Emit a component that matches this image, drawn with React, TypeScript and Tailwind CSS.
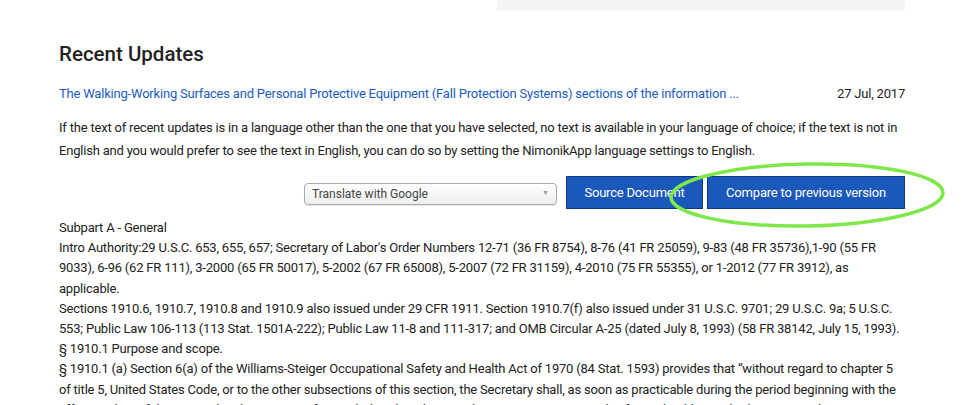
import React from "react";

const BODY = [
  "Subpart A - General",
  "Intro Authority:29 U.S.C. 653, 655, 657; Secretary of Labor's Order Numbers 12-71 (36 FR 8754), 8-76 (41 FR 25059), 9-83 (48 FR 35736),1-90 (55 FR 9033), 6-96 (62 FR 111), 3-2000 (65 FR 50017), 5-2002 (67 FR 65008), 5-2007 (72 FR 31159), 4-2010 (75 FR 55355), or 1-2012 (77 FR 3912), as applicable.",
  "Sections 1910.6, 1910.7, 1910.8 and 1910.9 also issued under 29 CFR 1911. Section 1910.7(f) also issued under 31 U.S.C. 9701; 29 U.S.C. 9a; 5 U.S.C. 553; Public Law 106-113 (113 Stat. 1501A-222); Public Law 11-8 and 111-317; and OMB Circular A-25 (dated July 8, 1993) (58 FR 38142, July 15, 1993).",
  "§ 1910.1 Purpose and scope.",
  "§ 1910.1 (a) Section 6(a) of the Williams-Steiger Occupational Safety and Health Act of 1970 (84 Stat. 1593) provides that \u201cwithout regard to chapter 5 of title 5, United States Code, or to the other subsections of this section, the Secretary shall, as soon as practicable during the period beginning with the effective date of this Act and ending 2 years after such date, by rule promulgate as an occupational safety or health standard any national consensus standard, and any established Federal standard, unless he determines that the promulgation of such a standard would not result in improved safety or health for specifically designated employees.\u201d",
];

export default function App() {
  return (
    <div className="w-[980px] h-[405px] overflow-hidden bg-white font-['Roboto',sans-serif] text-[#222]">
      <div className="w-[846px] ml-[59px]">
        {/* top panel */}
        <div className="flex justify-end">
          <div className="w-[408px] h-[11px] bg-[#f5f5f5]" />
        </div>

        <h2 className="mt-[30px] text-[20.5px] leading-[26px] font-medium text-[#222]">
          Recent Updates
        </h2>

        <div className="mt-[19px] flex items-center justify-between text-[13px] leading-[16px] tracking-[-0.2px]">
          <a className="text-[#1a5cc6]">
            The Walking-Working Surfaces and Personal Protective Equipment (Fall Protection Systems) sections of the information ...
          </a>
          <span className="text-[#222]">27 Jul, 2017</span>
        </div>

        <p className="mt-[14px] text-[13px] leading-[23px] tracking-[-0.2px]">
          If the text of recent updates is in a language other than the one that you have selected, no text is available in your language of choice; if the text is not in English and you would prefer to see the text in English, you can do so by setting the NimonikApp language settings to English.
        </p>

        {/* actions */}
        <div className="mt-[14px] flex items-center justify-end gap-[4px]">
          <div className="mr-[5px] mt-[2px] w-[253px] h-[22px] flex items-center justify-between rounded-[4px] border border-[#aaa] bg-gradient-to-b from-white to-[#eee] px-[7px] text-[12px] text-[#444] shadow-[0_1px_1px_rgba(0,0,0,0.1)]">
            <span>Translate with Google</span>
            <span className="text-[7px] text-[#999]">▼</span>
          </div>
          <button className="h-[33px] w-[137px] bg-[#1b58bb] border border-[#0d3a86] text-white text-[13px] tracking-[-0.2px]">
            Source Document
          </button>
          <div className="relative">
            <button className="h-[33px] w-[198px] bg-[#1b58bb] border border-[#0d3a86] text-white text-[13px] tracking-[-0.2px]">
              Compare to previous version
            </button>
            <svg
              className="absolute left-[-39px] top-[-15px] pointer-events-none"
              width="278"
              height="68"
              viewBox="0 0 278 68"
            >
              <ellipse
                cx="139"
                cy="34"
                rx="136"
                ry="31"
                fill="none"
                stroke="#7ee84a"
                strokeWidth="3.5"
                transform="rotate(-1 139 34)"
              />
            </svg>
          </div>
        </div>

        <div className="mt-[9px] text-[13px] leading-[20.2px] tracking-[-0.2px]">
          {BODY.map((t, i) => (
            <p key={i}>{t}</p>
          ))}
        </div>
      </div>
    </div>
  );
}
